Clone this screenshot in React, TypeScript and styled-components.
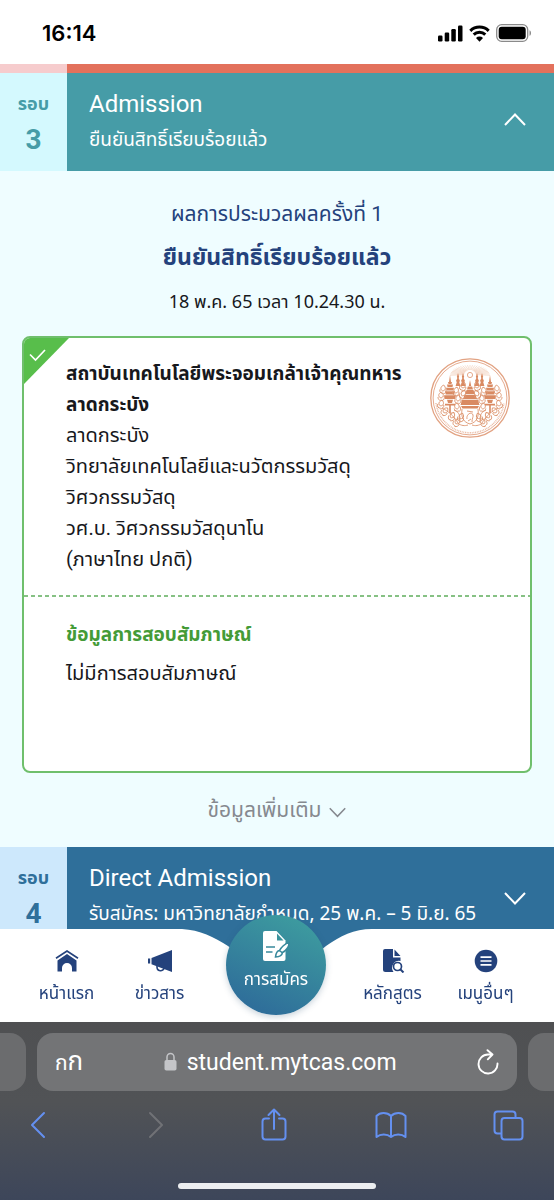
import React from "react";
import styled, { createGlobalStyle } from "styled-components";

const GlobalStyle = createGlobalStyle`
  *, *::before, *::after { box-sizing: border-box; }
  body {
    margin: 0;
    background: #effdff;
    color: #17181c;
    font-family: Roboto, "Noto Sans Thai", "Noto Sans", sans-serif;
  }
  button { font: inherit; border: 0; padding: 0; background: none; cursor: pointer; }
  h2, h3, p { margin: 0; }
  svg { display: block; flex: none; }
`;

const Page = styled.div`
  min-height: 100vh;
  padding-bottom: 240px;
`;

const StatusBar = styled.header`
  display: flex;
  align-items: center;
  justify-content: space-between;
  height: 64px;
  padding: 2px 22px 0 42px;
  background: #fff;
  color: #000;
`;

const Time = styled.time`
  font: 600 22px/24px Inter, sans-serif;
`;

const StatusIcons = styled.div`
  display: flex;
  align-items: center;
  gap: 6px;
`;

const RoundStrip = styled.div`
  height: 9px;
  background: linear-gradient(to right, #f6cccd 67px, #e3715c 67px);
`;

const RoundPanel = styled.div<{ $bg: string }>`
  padding-bottom: 15px;
  background: ${(p) => p.$bg};
`;

const RoundHeader = styled.button<{ $bg: string }>`
  display: flex;
  width: 100%;
  min-height: 98px;
  background: ${(p) => p.$bg};
  color: #fff;
  text-align: left;
`;

const RoundTag = styled.span<{ $bg: string; $fg: string }>`
  display: flex;
  flex-direction: column;
  align-items: center;
  flex: none;
  align-self: stretch;
  width: 67px;
  padding-top: 16px;
  background: ${(p) => p.$bg};
  color: ${(p) => p.$fg};
  font-weight: 700;
  font-size: 18px;
  line-height: 30px;
`;

const RoundNumber = styled.span`
  font-size: 28px;
  line-height: 42px;
`;

const RoundText = styled.span`
  flex: 1;
  min-width: 0;
  padding: 14px 0 0 22px;
  white-space: nowrap;
`;

const RoundTitle = styled.span`
  display: block;
  font-size: 24px;
  line-height: 34px;
`;

const RoundNote = styled.span`
  display: block;
  font-family: "Noto Sans", "Noto Sans Thai", sans-serif;
  font-size: 19px;
  line-height: 36px;
`;

const RoundChevron = styled.span`
  align-self: center;
  margin-right: 28px;
`;

const Result = styled.main`
  padding: 24px 22px 19px;
  text-align: center;
`;

const ResultRound = styled.p`
  color: #24427c;
  font-size: 21px;
  line-height: 38px;
`;

const ResultTitle = styled.h2`
  color: #24427c;
  font-size: 23px;
  line-height: 50px;
`;

const ResultDate = styled.p`
  margin-bottom: 17px;
  font-family: "Noto Sans", "Noto Sans Thai", sans-serif;
  font-size: 18px;
  line-height: 36px;
`;

const Card = styled.section`
  position: relative;
  overflow: hidden;
  border: 2px solid #6fbf6c;
  border-radius: 8px;
  background: #fff;
  text-align: left;
  font-size: 20px;
  line-height: 31px;
`;

const CheckCorner = styled.span`
  position: absolute;
  top: 0;
  left: 0;
`;

const Programme = styled.div`
  display: flex;
  justify-content: space-between;
  padding: 20px 20px 22px 42px;
  background: repeating-linear-gradient(to right, #86c184 0 4px, transparent 4px 7px) bottom / 100% 2px no-repeat;
`;

const Institute = styled.h3`
  font-size: 19px;
  line-height: 31px;
`;

const Interview = styled.div`
  display: flex;
  flex-direction: column;
  gap: 8px;
  padding: 22px 20px 82px 42px;
`;

const InterviewTitle = styled.h3`
  color: #449b37;
  font-size: 19px;
  line-height: 31px;
`;

const MoreButton = styled.button`
  display: inline-flex;
  align-items: center;
  gap: 8px;
  margin-top: 19px;
  color: #86898f;
  font-size: 21px;
  line-height: 36px;
`;

const Dock = styled.div`
  position: fixed;
  right: 0;
  bottom: 0;
  left: 0;
`;

const Nav = styled.nav`
  position: relative;
  display: grid;
  grid-template-columns: 1fr 1fr 140px 1fr 1fr;
  height: 93px;
  padding: 0 22px 0 20px;
`;

const NavBackdrop = styled.div`
  position: absolute;
  inset: 0;
  display: flex;
`;

const NavFill = styled.div`
  flex: 1;
  background: #fff;
`;

const NavLink = styled.a`
  position: relative;
  display: flex;
  flex-direction: column;
  align-items: center;
  gap: 5px;
  padding-top: 20px;
  color: #24427c;
  font-size: 17px;
  line-height: 30px;
  text-decoration: none;
  white-space: nowrap;
`;

const ApplyLink = styled.a`
  position: relative;
  top: -14px;
  justify-self: center;
  display: flex;
  flex-direction: column;
  align-items: center;
  gap: 2px;
  width: 100px;
  height: 100px;
  padding-top: 15px;
  border-radius: 50%;
  background: linear-gradient(205deg, #3d9b9f 10%, #2f6f9a 85%);
  box-shadow: 0 2px 6px rgba(40, 80, 110, 0.25);
  color: #fff;
  font-size: 17px;
  line-height: 30px;
  text-decoration: none;
`;

const Browser = styled.footer`
  height: 178px;
  padding-top: 11px;
  background: linear-gradient(#4f5052, #515356 45%, #3d465a);
  font-family: Inter, "Noto Sans Thai", sans-serif;
`;

const Tabs = styled.div`
  display: flex;
  gap: 11px;
`;

const TabStub = styled.div<{ $side: "left" | "right" }>`
  width: 26px;
  height: 58px;
  border-radius: ${(p) => (p.$side === "left" ? "0 16px 16px 0" : "16px 0 0 16px")};
  background: #6b6c6e;
`;

const AddressBar = styled.div`
  display: flex;
  align-items: center;
  justify-content: space-between;
  flex: 1;
  height: 58px;
  padding: 0 18px;
  border-radius: 16px;
  background: #737476;
  color: #fff;
`;

const ReaderButton = styled.button`
  color: #fff;
  font-size: 21px;
`;

const ReaderLarge = styled.span`
  font-size: 26px;
`;

const Address = styled.button`
  display: flex;
  align-items: center;
  gap: 10px;
  color: #fff;
  font-family: Roboto, sans-serif;
  font-size: 23px;
`;

const IconButton = styled.button`
  color: #fff;
`;

const Toolbar = styled.div`
  display: flex;
  justify-content: space-between;
  padding: 17px 28px 0 21px;
`;

const ToolButton = styled.button<{ $off?: boolean }>`
  color: ${(p) => (p.$off ? "#707276" : "#6490f0")};
`;

const HomeIndicator = styled.div`
  width: 198px;
  height: 6px;
  margin: 41px auto 0;
  border-radius: 3px;
  background: #eceef0;
`;

const Chevron = ({ up, size = 22 }: { up?: boolean; size?: number }) => (
  <svg width={size} height={size} viewBox="0 0 22 22" fill="none" stroke="currentColor" strokeWidth="2">
    <path d={up ? "M1 14 11 3.500 21 14" : "M1 8l10 10.500L21 8"} />
  </svg>
);

const Signal = () => (
  <svg width="25" height="17" viewBox="0 0 25 17" fill="#000">
    <rect x="0" y="10.500" width="4.500" height="6" rx="1.200" />
    <rect x="6.700" y="7.500" width="4.500" height="9" rx="1.200" />
    <rect x="13.300" y="4" width="4.500" height="12.500" rx="1.200" />
    <rect x="20" y="0.500" width="4.500" height="16" rx="1.200" />
  </svg>
);

const Wifi = () => (
  <svg width="21" height="17" viewBox="0 0 21 17">
    <path d="M1.300 5.800a13.200 13.200 0 0 1 18.400 0M4.700 9.600a8.300 8.300 0 0 1 11.600 0" fill="none" stroke="#000" strokeWidth="3" />
    <path d="M7 13a5 5 0 0 1 7 0l-3.500 3.700z" fill="#000" />
  </svg>
);

const Battery = () => (
  <svg width="36" height="18" viewBox="0 0 36 18">
    <rect x="0.700" y="0.700" width="31" height="16.600" rx="5" fill="none" stroke="#8a8a8a" strokeWidth="1.300" />
    <rect x="2.700" y="2.700" width="27" height="12.600" rx="3" fill="#000" />
    <path d="M33.500 6.200c2 .8 2 4.800 0 5.600z" fill="#8a8a8a" />
  </svg>
);

const Chedi = ({ x, y, s }: { x: number; y: number; s: number }) => (
  <g transform={`translate(${x} ${y}) scale(${s})`}>
    <path d="M0-15 1 -8H-1zM-2-8H2L1.500-6H-1.500zM-3-5.500H3L2.500-3H-2.500zM-4-2.300H4L3.400.5H-3.400zM-5 1.300H5L4.300 4.500H-4.300zM-6 5.300H6L5 9H-5zM-3 9.800H3L2 13H-2zM-5 13.800H5V15.500H-5zM-.8 15H.8V23H-.8z" />
  </g>
);

const Emblem = () => {
  const rays = Array.from({ length: 25 }, (_, i) => {
    const a = Math.PI * (0.02 + (i * 0.96) / 24);
    return `M${40 - Math.cos(a) * 6} ${17 - Math.sin(a) * 5}L${40 - Math.cos(a) * 20} ${18 - Math.sin(a) * 11}`;
  }).join("");
  const sprigs = [
    [11, 46, 20], [15, 53, 40], [22, 58, 30], [27, 49, -10], [31, 59, 25], [11, 38, 0], [28, 41, 10],
    [26, 33, 15], [27, 64, 40], [33, 28, 20], [13, 31, 10], [33, 36, 30],
  ];
  return (
    <svg width="80" height="80" viewBox="0 0 80 80" fill="#d98a62" role="img" aria-label="ตราสถาบัน">
      <circle cx="40" cy="40" r="39.200" fill="none" stroke="#e2a282" strokeWidth="1.300" />
      <circle cx="40" cy="40" r="36.900" fill="none" stroke="#e2a282" strokeWidth="0.900" />
      <path d="M6 45a34.300 34.300 0 0 0 68 0" fill="none" stroke="#e8b8a0" strokeWidth="1.500" strokeDasharray="0.900 0.800" />
      <path d={rays} stroke="#ecc0a6" strokeWidth="0.500" />
      <circle cx="40" cy="17" r="2.600" fill="none" stroke="#e6ac8e" strokeWidth="1" />
      <Chedi x={20} y={32} s={1} />
      <Chedi x={60} y={32} s={1} />
      {[28, 33, 47, 52].map((x) => (
        <path key={x} d={`M${x} 15l1.200 4-.6 1 1.400 3-.8 1 1.200 4H${x - 2.4}l1.200-4-.8-1 1.400-3-.6-1z`} />
      ))}
      <path d="M40 22l1.200 6h-2.400zM37.800 28.500h4.400l.8 3h-6zM36.500 32h7l1.200 4h-9.400zM34.500 36.700h11l1.500 4.300h-14zM32 41.800h16l1.500 5.200h-19zM31 48h18l-1.500 2.500h-15z" />
      <g fill="none" stroke="#dc946e" strokeWidth="0.900">
        <path d="M32 51c-1 8 1 13 8 15 7-2 9-7 8-15M37 61c-1-5 5-8 6-4 .5 2-1 3-1 7M38 63l3-2M37 53l6 1" />
        {[0, 1].map((side) => (
          <g key={side} transform={side ? "translate(80 0) scale(-1 1)" : undefined}>
            {sprigs.map(([x, y, r]) => (
              <path
                key={`${x}-${y}`}
                transform={`translate(${x} ${y}) rotate(${r})`}
                d="M0-4c-3 2-3 5 0 6 3-1 3-4 0-6M-3 1c0 3 2 4 4 3M3 0c1 2 0 4-2 5"
              />
            ))}
            <path d="M12 50c6 3 12 8 16 15 3 3 7 3 10 2M24 52c4 1 6 5 6 9" />
          </g>
        ))}
      </g>
    </svg>
  );
};

const HomeIcon = () => (
  <svg width="24" height="24" viewBox="0 0 24 24">
    <path d="M1 9.300 12 2l11 7.300" fill="none" stroke="currentColor" strokeWidth="1.700" />
    <path d="M2.500 11.500 12 5l9.500 6.500v11H17V19a5 5 0 0 0-10 0v3.500H2.500z" fill="currentColor" />
  </svg>
);

const NewsIcon = () => (
  <svg width="24" height="24" viewBox="0 0 24 24" fill="currentColor">
    <path d="M0 9.500h2.200v5H0zM3.500 9 24 1v22l-6-2.300-14.500-5.400z" />
    <path d="M9 17c-.5 6 6.500 6 7 1.800" fill="none" stroke="currentColor" strokeWidth="1.600" />
  </svg>
);

const CourseIcon = () => (
  <svg width="24" height="24" viewBox="0 0 24 24" fill="currentColor">
    <path d="M4 0h8v8.500h7.500V12a7 7 0 0 0-7 11H4.500A2.500 2.500 0 0 1 2 20.500V2a2 2 0 0 1 2-2zM13.500.5l6 6.500h-6z" />
    <circle cx="16.500" cy="17.500" r="4" fill="none" stroke="currentColor" strokeWidth="1.700" />
    <path d="m19.500 20.500 3 3" stroke="currentColor" strokeWidth="2" />
  </svg>
);

const MenuIcon = () => (
  <svg width="24" height="24" viewBox="0 0 24 24">
    <circle cx="12" cy="12" r="11.300" fill="currentColor" />
    <path d="M6.500 8.200h11M6.500 12h11M6.500 15.800h11" stroke="#fff" strokeWidth="1.700" />
  </svg>
);

const ApplyIcon = () => (
  <svg width="28" height="32" viewBox="0 0 28 32">
    <path d="M3 1h11.500L23.500 10.500V29a2 2 0 0 1-2 2H3A2 2 0 0 1 1 29V3a2 2 0 0 1 2-2z" fill="#fff" />
    <path d="M15 3.500v7h6.500z" fill="#3b929c" />
    <path d="M4 17h9M4 22h6.500" stroke="#38899c" strokeWidth="1.700" />
    <path
      d="M27 12.500c-4 1-8 5-9.500 8-2.500.2-3.500 2.500-4 6.500 3.500-.2 6.500-1 7-4.500 3-1.500 7-6 6.500-10z"
      fill="#fff"
      stroke="#38899c"
      strokeWidth="1.600"
    />
    <path d="m17.300 20.500 3.300 2.300" stroke="#38899c" strokeWidth="1.500" />
  </svg>
);

const LockIcon = () => (
  <svg width="13" height="20" viewBox="0 0 13 20" fill="#c4c5c8">
    <rect x="0.500" y="8" width="12" height="10.500" rx="1.800" />
    <path d="M3 9V5a3.500 3.500 0 0 1 7 0v4" fill="none" stroke="#c4c5c8" strokeWidth="1.500" />
  </svg>
);

const ReloadIcon = () => (
  <svg width="22" height="26" viewBox="0 0 22 26" fill="none" stroke="currentColor" strokeWidth="1.900" strokeLinecap="round" strokeLinejoin="round">
    <path d="M20.500 14.500A9.500 9.500 0 1 1 11 5.500h4M10.500 1.200l5 4.300-4.700 4.800" />
  </svg>
);

const toolIcons: { label: string; d: string; off?: boolean }[] = [
  { label: "ย้อนกลับ", d: "M23 5 11 17l12 12" },
  { label: "ไปข้างหน้า", d: "M11 5l12 12-12 12", off: true },
  { label: "แชร์", d: "M12 10.500H8.500a3 3 0 0 0-3 3v15a3 3 0 0 0 3 3h17a3 3 0 0 0 3-3v-15a3 3 0 0 0-3-3H22M17 21V1.500M11.500 7 17 1.500 22.500 7" },
  { label: "บุ๊กมาร์ก", d: "M17 8C13 4 6 4 2.500 8v21c4-3.500 10.500-3.500 14.500 0 4-3.500 10.500-3.500 14.500 0V8C28 4 21 4 17 8zv21" },
  { label: "แท็บ", d: "M9 25.500H5.500a3 3 0 0 1-3-3v-16a3 3 0 0 1 3-3h15a3 3 0 0 1 3 3V10M12.500 10h15a3 3 0 0 1 3 3v15.500a3 3 0 0 1-3 3h-15a3 3 0 0 1-3-3V13a3 3 0 0 1 3-3z" },
];

type RoundProps = {
  number: string;
  title: string;
  note: string;
  bg: string;
  tagBg: string;
  open?: boolean;
};

const Round = ({ number, title, note, bg, tagBg, open }: RoundProps) => (
  <RoundHeader $bg={bg} aria-expanded={!!open}>
    <RoundTag $bg={tagBg} $fg={bg}>
      รอบ
      <RoundNumber>{number}</RoundNumber>
    </RoundTag>
    <RoundText>
      <RoundTitle>{title}</RoundTitle>
      <RoundNote>{note}</RoundNote>
    </RoundText>
    <RoundChevron>
      <Chevron up={open} />
    </RoundChevron>
  </RoundHeader>
);

export default function App() {
  return (
    <>
      <GlobalStyle />
      <Page>
        <StatusBar>
          <Time>16:14</Time>
          <StatusIcons>
            <Signal />
            <Wifi />
            <Battery />
          </StatusIcons>
        </StatusBar>
        <RoundStrip />
        <Round number="3" title="Admission" note="ยืนยันสิทธิ์เรียบร้อยแล้ว" bg="#469ca7" tagBg="#d4f9fe" open />
        <Result>
          <ResultRound>ผลการประมวลผลครั้งที่ 1</ResultRound>
          <ResultTitle>ยืนยันสิทธิ์เรียบร้อยแล้ว</ResultTitle>
          <ResultDate>18 พ.ค. 65 เวลา 10.24.30 น.</ResultDate>
          <Card>
            <CheckCorner>
              <svg width="46" height="46" viewBox="0 0 46 46">
                <path d="M0 0h45L0 46z" fill="#58be4b" />
                <path d="m6 16.500 5.500 5.500L21 12" fill="none" stroke="#fff" strokeWidth="1.700" />
              </svg>
            </CheckCorner>
            <Programme>
              <div>
                <Institute>สถาบันเทคโนโลยีพระจอมเกล้าเจ้าคุณทหารลาดกระบัง</Institute>
                <p>ลาดกระบัง</p>
                <p>วิทยาลัยเทคโนโลยีและนวัตกรรมวัสดุ</p>
                <p>วิศวกรรมวัสดุ</p>
                <p>วศ.บ. วิศวกรรมวัสดุนาโน</p>
                <p>(ภาษาไทย ปกติ)</p>
              </div>
              <Emblem />
            </Programme>
            <Interview>
              <InterviewTitle>ข้อมูลการสอบสัมภาษณ์</InterviewTitle>
              <p>ไม่มีการสอบสัมภาษณ์</p>
            </Interview>
          </Card>
          <MoreButton>
            ข้อมูลเพิ่มเติม
            <Chevron size={17} />
          </MoreButton>
        </Result>
        <RoundPanel $bg="#2f6f9a">
          <Round
            number="4"
            title="Direct Admission"
            note="รับสมัคร: มหาวิทยาลัยกำหนด, 25 พ.ค. – 5 มิ.ย. 65"
            bg="#2f6f9a"
            tagBg="#cde8fc"
          />
        </RoundPanel>
      </Page>
      <Dock>
        <Nav>
          <NavBackdrop>
            <NavFill />
            <svg width="190" height="93" viewBox="0 0 190 93" fill="#fff">
              <path d="M0 0c18 1 32 8 46 17l49 40 49-40C158 7 172 0 190 0v93H0z" />
            </svg>
            <NavFill />
          </NavBackdrop>
          <NavLink href="#home">
            <HomeIcon />
            หน้าแรก
          </NavLink>
          <NavLink href="#news">
            <NewsIcon />
            ข่าวสาร
          </NavLink>
          <ApplyLink href="#apply">
            <ApplyIcon />
            การสมัคร
          </ApplyLink>
          <NavLink href="#courses">
            <CourseIcon />
            หลักสูตร
          </NavLink>
          <NavLink href="#menu">
            <MenuIcon />
            เมนูอื่นๆ
          </NavLink>
        </Nav>
        <Browser>
          <Tabs>
            <TabStub $side="left" />
            <AddressBar>
              <ReaderButton>
                ก<ReaderLarge>ก</ReaderLarge>
              </ReaderButton>
              <Address>
                <LockIcon />
                student.mytcas.com
              </Address>
              <IconButton aria-label="โหลดใหม่">
                <ReloadIcon />
              </IconButton>
            </AddressBar>
            <TabStub $side="right" />
          </Tabs>
          <Toolbar>
            {toolIcons.map((icon) => (
              <ToolButton key={icon.label} aria-label={icon.label} $off={icon.off} disabled={icon.off}>
                <svg width="34" height="34" viewBox="0 0 34 34" fill="none" stroke="currentColor" strokeWidth="2" strokeLinecap="round" strokeLinejoin="round">
                  <path d={icon.d} />
                </svg>
              </ToolButton>
            ))}
          </Toolbar>
          <HomeIndicator />
        </Browser>
      </Dock>
    </>
  );
}
